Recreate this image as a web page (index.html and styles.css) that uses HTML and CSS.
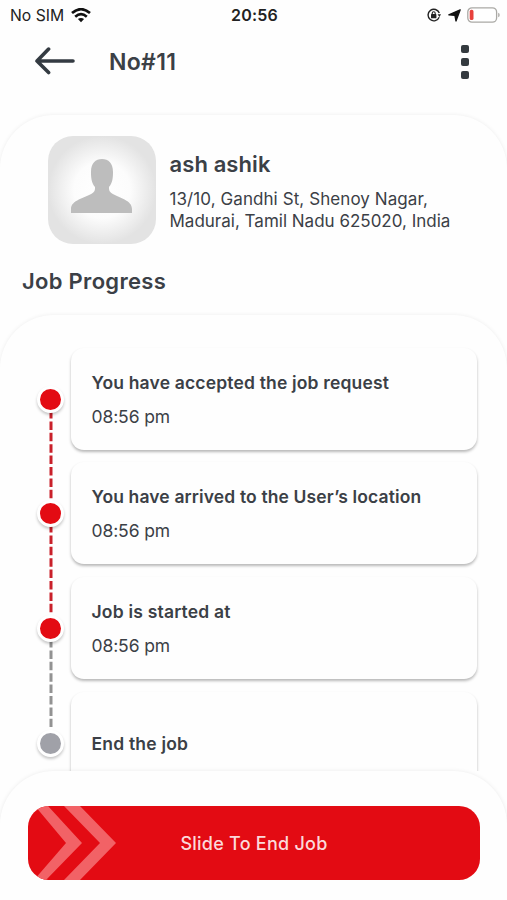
FILE: index.html
```html
<!DOCTYPE html>
<html lang="en">
<head>
<meta charset="utf-8">
<title>Job No#11</title>
<link rel="stylesheet" href="styles.css">
</head>
<body>
<div class="screen">
  <header class="status">
    <div class="carrier"><span>No SIM</span>
      <svg width="20" height="15" viewBox="0 0 20 15" fill="none" stroke="#111" stroke-width="2.7"><path d="M1 5.1Q10-2.7 19 5.1M4.2 8.7Q10 3.7 15.8 8.7"/><path d="M6.9 11.1Q10 8.7 13.1 11.1L10 14.3Z" fill="#111" stroke="none"/></svg>
    </div>
    <span class="clock">20:56</span>
    <div class="indicators">
      <svg width="14" height="14" viewBox="0 0 14 14" fill="none" stroke="#222"><path d="M12.3 5A5.8 5.8 0 1 0 12.2 9.3" stroke-width="1.4"/><path d="M10.6 6.3h3.4l-1.6 2.8z" fill="#222" stroke="none"/><rect x="4" y="6.1" width="5.4" height="4.2" rx=".6" fill="#222" stroke="none"/><path d="M5.2 6.500V5.200a1.500 1.500 0 0 1 3 0v1.300" stroke-width="1.1"/></svg>
      <svg width="13" height="13" viewBox="0 0 13 13"><path d="M12.2.8 8 12 6.9 6.400.8 5.800Z" fill="#111" stroke="#111" stroke-width="1.3" stroke-linejoin="round"/></svg>
      <svg width="33" height="16" viewBox="0 0 33 16"><rect x=".8" y=".8" width="28.8" height="14.4" rx="4.2" fill="#fff" stroke="#aaa9a5" stroke-width="1.3"/><rect x="2.7" y="2.8" width="3.8" height="10.2" rx="1.6" fill="#e8413c"/><path d="M31.2 5.7q1.5.5 1.5 2.3t-1.5 2.3z" fill="#aaa9a5"/></svg>
    </div>
  </header>
  <nav class="bar">
    <svg width="40" height="28" viewBox="0 0 40 28" fill="none" stroke="#343b42" stroke-width="3.6" stroke-linecap="round" stroke-linejoin="round"><path d="M38 14H2M13.6 2.1 2 14 13.6 25.5"/></svg>
    <h1 class="job-no">No#11</h1>
    <div class="more"><i></i><i></i><i></i></div>
  </nav>
  <main class="details">
    <section class="customer">
      <svg class="avatar" width="108" height="108" viewBox="0 0 108 108">
        <defs><radialGradient id="glow"><stop offset="0" stop-color="#fff"/><stop offset=".52" stop-color="#fcfcfc"/><stop offset="1" stop-color="#e3e3e3"/></radialGradient></defs>
        <rect width="108" height="108" rx="25" fill="#e3e3e3"/><circle cx="54" cy="54" r="54" fill="url(#glow)"/>
        <path d="M23 77V73C23 64 37 62 44 57.5Q47.5 55.5 47 51C43.5 47 43 42 43 36C43 27 47.5 23 54 23S65 27 65 36C65 42 64.5 47 61 51Q60.5 55.5 64 57.5C71 62 84 64 84 73V77Z" fill="#bdbdbd"/>
      </svg>
      <div class="who">
        <h2 class="name">ash ashik</h2>
        <p class="address"><span class="line1">13/10, Gandhi St, Shenoy Nagar,</span><br><span class="line2">Madurai, Tamil Nadu 625020, India</span></p>
      </div>
    </section>
    <h2 class="heading">Job Progress</h2>
    <section class="progress">
      <div class="step">
        <div class="rail"><b class="dot"></b><svg class="link" width="4" height="88"><path d="M2 0V88"/></svg></div>
        <article class="card"><h3 class="t1">You have accepted the job request</h3><p>08:56 pm</p></article>
      </div>
      <div class="step">
        <div class="rail"><b class="dot"></b><svg class="link" width="4" height="88"><path d="M2 0V88"/></svg></div>
        <article class="card"><h3 class="t2">You have arrived to the User’s location</h3><p>08:56 pm</p></article>
      </div>
      <div class="step pending">
        <div class="rail"><b class="dot"></b><svg class="link" width="4" height="88"><path d="M2 0V86"/></svg></div>
        <article class="card"><h3 class="t3">Job is started at</h3><p>08:56 pm</p></article>
      </div>
      <div class="step">
        <div class="rail"><b class="dot idle"></b></div>
        <article class="card"><h3 class="t4">End the job</h3></article>
      </div>
    </section>
  </main>
  <footer class="dock">
    <button class="slide">
      <svg class="chevrons" width="90" height="74" viewBox="0 0 90 74" fill="#f26266"><path d="M7 0H20L54 37 18 74H6L38 37Z"/><path d="M36 0H52L88 37 52 74H36L72 37Z"/></svg>
      <span class="label">Slide To End Job</span>
    </button>
  </footer>
</div>
</body>
</html>
```
FILE: styles.css
```css
* { box-sizing: border-box; margin: 0; padding: 0; }
body { background: #fefefe; font-family: Inter, "Liberation Sans", sans-serif; color: #3b4046; }
svg { display: block; }
.screen { height: 900px; display: flex; flex-direction: column; overflow: hidden; background: #fefefe; }
.status { height: 30px; flex: none; display: grid; grid-template-columns: 1fr auto 1fr; align-items: center; padding: 0 8px 0 10px; color: #222; }
.carrier { display: flex; align-items: center; gap: 7px; font-size: 15.7px; }
.clock { font-size: 16px; font-weight: 600; letter-spacing: .2px; }
.indicators { display: flex; align-items: center; justify-content: flex-end; gap: 6px; margin-right: -1px; }
.indicators svg:first-child { margin-right: 1px; }
.bar { height: 85px; flex: none; display: flex; align-items: flex-start; padding: 17px 38px 0 35px; }
.job-no { margin-left: 34px; padding-top: 1px; font-size: 23px; line-height: 29px; font-weight: 600; letter-spacing: .3px; }
.more { margin-left: auto; margin-top: -2px; display: grid; gap: 5px; }
.more i { width: 8px; height: 8px; border-radius: 2px; background: #343a3f; }
.details { flex: none; height: 656px; border-radius: 54px 54px 0 0; box-shadow: 0 0 4px rgba(0,0,0,.07); clip-path: inset(-8px 0 0); background: #fefefe; display: flex; flex-direction: column; }
.customer { display: flex; gap: 13.5px; padding: 21px 0 0 48px; }
.who { padding-top: 14px; }
.name { font-size: 22px; line-height: 28px; font-weight: 600; letter-spacing: .1px; }
.address { margin-top: 9.5px; font-size: 17px; line-height: 22px; white-space: nowrap; }
.line1 { letter-spacing: .08px; }
.line2 { letter-spacing: 0; }
.heading { margin: 21.5px 0 0 22px; font-size: 22px; line-height: 30px; font-weight: 600; letter-spacing: .3px; }
.progress { flex: none; overflow: hidden; margin-top: 19px; height: 457px; padding: 33px 30px 0 37px; border-radius: 54px 54px 0 0; box-shadow: 0 0 4px rgba(0,0,0,.07); background: #fefefe; }
.step { display: flex; gap: 7px; height: 114.7px; }
.rail { width: 27px; flex: none; padding-top: 38px; display: flex; flex-direction: column; align-items: center; }
.dot { position: relative; z-index: 1; flex: none; width: 27px; height: 27px; border: 3px solid #fff; border-radius: 50%; background: #e30b13; box-shadow: 0 2px 3px rgba(0,0,0,.22); }
.idle { background: #a0a1a8; }
.link { flex: none; margin: -1px 0 -50px; stroke: #c9202a; stroke-width: 3; stroke-dasharray: 8.5 2.9; stroke-dashoffset: 2; }
.pending .link { stroke: #929292; }
.card { flex: 1; height: 102px; padding: 24px 20.5px; border-radius: 13px; background: #fefefe; box-shadow: 0 2px 3px rgba(0,0,0,.28); white-space: nowrap; }
.card h3 { font-size: 17.5px; line-height: 22px; font-weight: 600; }
.card p { margin-top: 12px; font-size: 17.5px; line-height: 22px; letter-spacing: -.1px; }
.card .t1 { letter-spacing: .17px; }
.card .t2 { letter-spacing: .13px; }
.card .t3 { letter-spacing: .2px; }
.card .t4 { margin-top: 17px; letter-spacing: .2px; }
.dock { position: relative; flex: none; height: 129px; padding: 35px 27px 0 28px; border-radius: 54px 54px 0 0; background: #fefefe; box-shadow: 0 0 4px rgba(0,0,0,.08); }
.slide { position: relative; display: flex; align-items: center; justify-content: center; width: 100%; height: 74px; border: 0; border-radius: 21px; overflow: hidden; background: #e30b13; color: #fbd9da; font: 500 18px Inter, sans-serif; letter-spacing: .25px; }
.chevrons { position: absolute; left: 0; top: 0; }
```
